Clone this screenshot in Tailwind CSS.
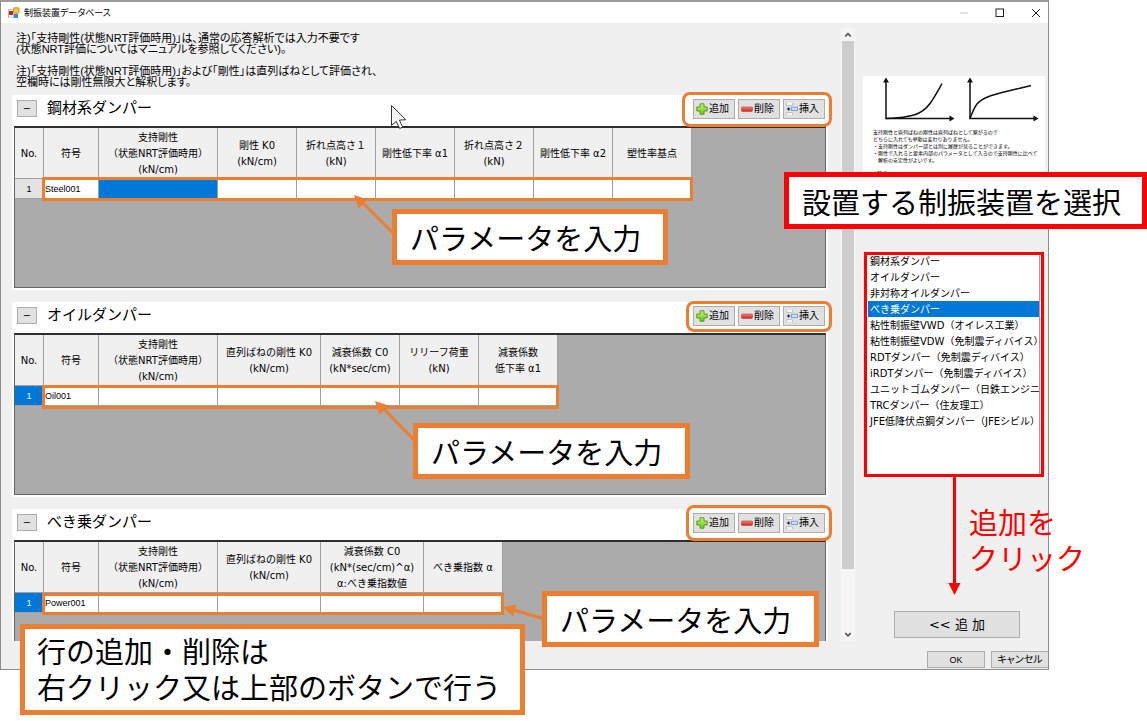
<!DOCTYPE html>
<html lang="ja">
<head>
<meta charset="utf-8">
<title>制振装置データベース</title>
<script src="https://cdn.jsdelivr.net/npm/@tailwindcss/browser@4"></script>
</head>
<body class="bg-white text-black">
<svg class="absolute h-0 w-0" aria-hidden="true">
  <defs>
    <linearGradient id="g-green" x1="0" y1="0" x2="0" y2="1"><stop offset="0" stop-color="#c6f27a"/><stop offset="1" stop-color="#6cc414"/></linearGradient>
    <linearGradient id="g-red" x1="0" y1="0" x2="0" y2="1"><stop offset="0" stop-color="#f3837a"/><stop offset="1" stop-color="#cf1f1a"/></linearGradient>
  </defs>
  <symbol id="i-add" viewBox="0 0 12 12"><path d="M4 .8h4V4h3.200v4H8v3.200H4V8H.8V4H4z" fill="url(#g-green)" stroke="#55a01c" stroke-width="1" stroke-linejoin="round"/></symbol>
  <symbol id="i-del" viewBox="0 0 12 12"><rect x=".5" y="4" width="11" height="4.500" rx="1" fill="url(#g-red)" stroke="#c9473f" stroke-width=".7"/></symbol>
  <symbol id="i-ins" viewBox="0 0 12 12"><path d="M.5 0v2.500h6V0M.5 12V9.500h6V12" fill="#f6f6f6" stroke="#b9bec6" stroke-width=".9"/><rect x="5.500" y="4.300" width="6" height="3.200" fill="#cfe0ff" stroke="#7d9fe8" stroke-width="1"/><path d="M.8 6h3.400M2.600 4.400v3.200" stroke="#222" stroke-width="1.200"/></symbol>
</svg>

<div class="relative flex h-screen min-h-[700px] min-w-[1100px] flex-col overflow-hidden pr-[98px] pb-[51px] font-['DejaVu_Sans','Noto_Sans_CJK_JP',sans-serif]">
  <div class="flex min-h-0 flex-1 flex-col border border-t-2 border-[#8c8c8c] border-t-[#9b9b9b] bg-[#f0f0f0]">
    <header class="flex h-[21px] shrink-0 items-center bg-white pr-0 pl-[7px]">
      <svg class="h-3 w-3" viewBox="0 0 12 12" aria-hidden="true">
        <path d="M.5 2.500h4M.5 2v9" stroke="#b9b9b9" stroke-width="1"/>
        <rect x="1" y="4" width="4" height="4" fill="#c5221c"/>
        <rect x="5.500" y=".8" width="5.500" height="5.500" rx=".5" fill="#f6c63a" stroke="#b98a12" stroke-width=".8"/>
        <rect x="5.500" y="7" width="4.500" height="4" fill="#3f86e8"/>
        <path d="M1 8.500h3.500V11H1z" fill="#dfe3ea"/>
      </svg>
      <h1 class="ml-1 text-[9px] leading-4 font-normal [font-feature-settings:'palt']">制振装置データベース</h1>
      <div class="ml-auto flex gap-3">
        <button type="button" aria-label="最小化" class="flex h-4 w-6 items-center justify-center"><svg class="h-3 w-3" viewBox="0 0 12 12"><path d="M2 6h8" stroke="#c8c8c8"/></svg></button>
        <button type="button" aria-label="最大化" class="flex h-4 w-6 items-center justify-center"><svg class="h-3 w-3" viewBox="0 0 12 12"><rect x="2" y="2" width="7.500" height="7.500" fill="none" stroke="#222"/></svg></button>
        <button type="button" aria-label="閉じる" class="flex h-4 w-6 items-center justify-center"><svg class="h-3 w-3" viewBox="0 0 12 12"><path d="M2 2l8 8M10 2l-8 8" stroke="#222"/></svg></button>
      </div>
    </header>

    <div class="flex min-h-0 flex-1 pt-[5px]">
      <main class="flex min-w-0 flex-1 flex-col gap-3 overflow-hidden pr-[13px] pl-[11px]">
        <div class="-mb-[5px] pt-[5px] pl-1 font-['Liberation_Sans','Noto_Sans_CJK_JP',sans-serif] text-[11px] leading-[11px] [font-feature-settings:'palt']">
          <p>注)「支持剛性(状態NRT評価時用)」は、通常の応答解析では入力不要です<br>(状態NRT評価についてはマニュアルを参照してください)。</p>
          <p class="mt-[11px]">注)「支持剛性(状態NRT評価時用)」および「剛性」は直列ばねとして評価され、<br>空欄時には剛性無限大と解釈します。</p>
        </div>

        <section class="shrink-0 bg-white px-[2px] pb-[2px]">
          <div class="flex h-[31px] items-start">
            <button type="button" aria-label="折りたたむ" class="mt-[5px] ml-[3px] h-[17px] w-5 border border-[#adadad] bg-[#e1e1e1] text-[10px] leading-[14px]">−</button>
            <h2 class="mt-[1px] ml-[10px] text-[15px] leading-6">鋼材系ダンパー</h2>
            <div class="relative mt-1 mr-[1px] ml-auto flex gap-[3px] text-[10px] leading-4">
              <button type="button" class="flex h-5 w-[42px] items-center gap-[1px] border border-[#adadad] bg-[#e1e1e1] pl-[2px]"><svg class="h-3 w-3"><use href="#i-add"/></svg>追加</button>
              <button type="button" class="flex h-5 w-[42px] items-center gap-[1px] border border-[#adadad] bg-[#e1e1e1] pl-[2px]"><svg class="h-3 w-3"><use href="#i-del"/></svg>削除</button>
              <button type="button" class="flex h-5 w-[42px] items-center gap-[1px] border border-[#adadad] bg-[#e1e1e1] pl-[2px]"><svg class="h-3 w-3"><use href="#i-ins"/></svg>挿入</button>
              <div class="pointer-events-none absolute -top-[7px] -right-[7px] -bottom-2 -left-[11px] rounded-lg border-3 border-[#ed7d31]"></div>
            </div>
          </div>
          <div class="h-[162px] border border-t-2 border-[#646464] border-t-[#2f2f2f] bg-[#ababab]">
            <div class="relative w-max">
              <table class="table-fixed border-separate border-spacing-0 text-center text-[10px] leading-4">
                <colgroup><col class="w-[29px]"><col class="w-[55px]"><col class="w-[119px]"><col class="w-[79px]"><col class="w-[79px]"><col class="w-[79px]"><col class="w-[79px]"><col class="w-[79px]"><col class="w-[79px]"></colgroup>
                <thead><tr class="h-[51px] bg-[#f0f0f0]">
                  <th class="border-r border-b border-[#a0a0a0] p-0 pt-[2px] font-normal">No.</th>
                  <th class="border-r border-b border-[#a0a0a0] p-0 pt-[2px] font-normal">符号</th>
                  <th class="border-r border-b border-[#a0a0a0] p-0 pt-[2px] font-normal whitespace-nowrap">支持剛性<br>（状態NRT評価時用）<br>(kN/cm)</th>
                  <th class="border-r border-b border-[#a0a0a0] p-0 pt-[2px] font-normal">剛性 K0<br>(kN/cm)</th>
                  <th class="border-r border-b border-[#a0a0a0] p-0 pt-[2px] font-normal">折れ点高さ１<br>(kN)</th>
                  <th class="border-r border-b border-[#a0a0a0] p-0 pt-[2px] font-normal whitespace-nowrap">剛性低下率 α1</th>
                  <th class="border-r border-b border-[#a0a0a0] p-0 pt-[2px] font-normal">折れ点高さ２<br>(kN)</th>
                  <th class="border-r border-b border-[#a0a0a0] p-0 pt-[2px] font-normal whitespace-nowrap">剛性低下率 α2</th>
                  <th class="border-r border-b border-[#a0a0a0] p-0 pt-[2px] font-normal">塑性率基点</th>
                </tr></thead>
                <tbody><tr class="h-5 bg-white font-['Liberation_Sans',sans-serif] text-[9px]">
                  <th class="border-r border-b border-[#a0a0a0] bg-[#e3e3e3] p-0 font-normal">1</th>
                  <td class="border-r border-b border-[#a0a0a0] p-0 pl-[1px] text-left">Steel001</td>
                  <td class="border-r border-b border-[#a0a0a0] bg-[#0078d7] p-0"></td>
                  <td class="border-r border-b border-[#a0a0a0] p-0"></td>
                  <td class="border-r border-b border-[#a0a0a0] p-0"></td>
                  <td class="border-r border-b border-[#a0a0a0] p-0"></td>
                  <td class="border-r border-b border-[#a0a0a0] p-0"></td>
                  <td class="border-r border-b border-[#a0a0a0] p-0"></td>
                  <td class="border-r border-b border-[#a0a0a0] p-0"></td>
                </tr></tbody>
              </table>
              <div class="pointer-events-none absolute -right-[1px] -bottom-[2px] left-[27px] h-6 border-3 border-[#ed7d31]"></div>
            </div>
          </div>
        </section>

        <section class="shrink-0 bg-white px-[2px] pb-[2px]">
          <div class="flex h-[31px] items-start">
            <button type="button" aria-label="折りたたむ" class="mt-[5px] ml-[3px] h-[17px] w-5 border border-[#adadad] bg-[#e1e1e1] text-[10px] leading-[14px]">−</button>
            <h2 class="mt-[1px] ml-[10px] text-[15px] leading-6">オイルダンパー</h2>
            <div class="relative mt-1 mr-[1px] ml-auto flex gap-[3px] text-[10px] leading-4">
              <button type="button" class="flex h-5 w-[42px] items-center gap-[1px] border border-[#adadad] bg-[#e1e1e1] pl-[2px]"><svg class="h-3 w-3"><use href="#i-add"/></svg>追加</button>
              <button type="button" class="flex h-5 w-[42px] items-center gap-[1px] border border-[#adadad] bg-[#e1e1e1] pl-[2px]"><svg class="h-3 w-3"><use href="#i-del"/></svg>削除</button>
              <button type="button" class="flex h-5 w-[42px] items-center gap-[1px] border border-[#adadad] bg-[#e1e1e1] pl-[2px]"><svg class="h-3 w-3"><use href="#i-ins"/></svg>挿入</button>
              <div class="pointer-events-none absolute -top-[5px] -right-[7px] -bottom-[6px] -left-[7px] rounded-lg border-3 border-[#ed7d31]"></div>
            </div>
          </div>
          <div class="h-[162px] border border-t-2 border-[#646464] border-t-[#2f2f2f] bg-[#ababab]">
            <div class="relative w-max">
              <table class="table-fixed border-separate border-spacing-0 text-center text-[10px] leading-4">
                <colgroup><col class="w-[29px]"><col class="w-[55px]"><col class="w-[119px]"><col class="w-[103px]"><col class="w-[79px]"><col class="w-[79px]"><col class="w-[79px]"></colgroup>
                <thead><tr class="h-[51px] bg-[#f0f0f0]">
                  <th class="border-r border-b border-[#a0a0a0] p-0 pt-[2px] font-normal">No.</th>
                  <th class="border-r border-b border-[#a0a0a0] p-0 pt-[2px] font-normal">符号</th>
                  <th class="border-r border-b border-[#a0a0a0] p-0 pt-[2px] font-normal whitespace-nowrap">支持剛性<br>（状態NRT評価時用）<br>(kN/cm)</th>
                  <th class="border-r border-b border-[#a0a0a0] p-0 pt-[2px] font-normal whitespace-nowrap">直列ばねの剛性 K0<br>(kN/cm)</th>
                  <th class="border-r border-b border-[#a0a0a0] p-0 pt-[2px] font-normal whitespace-nowrap">減衰係数 C0<br>(kN*sec/cm)</th>
                  <th class="border-r border-b border-[#a0a0a0] p-0 pt-[2px] font-normal">リリーフ荷重<br>(kN)</th>
                  <th class="border-r border-b border-[#a0a0a0] p-0 pt-[2px] font-normal">減衰係数<br>低下率 α1</th>
                </tr></thead>
                <tbody><tr class="h-5 bg-white font-['Liberation_Sans',sans-serif] text-[9px]">
                  <th class="border-r border-b border-[#a0a0a0] bg-[#0078d7] p-0 font-normal text-white">1</th>
                  <td class="border-r border-b border-[#a0a0a0] p-0 pl-[1px] text-left">Oil001</td>
                  <td class="border-r border-b border-[#a0a0a0] p-0"></td>
                  <td class="border-r border-b border-[#a0a0a0] p-0"></td>
                  <td class="border-r border-b border-[#a0a0a0] p-0"></td>
                  <td class="border-r border-b border-[#a0a0a0] p-0"></td>
                  <td class="border-r border-b border-[#a0a0a0] p-0"></td>
                </tr></tbody>
              </table>
              <div class="pointer-events-none absolute -right-[1px] -bottom-[3px] left-[27px] h-6 border-3 border-[#ed7d31]"></div>
            </div>
          </div>
        </section>

        <section class="shrink-0 bg-white px-[2px] pb-[2px]">
          <div class="flex h-[31px] items-start">
            <button type="button" aria-label="折りたたむ" class="mt-[5px] ml-[3px] h-[17px] w-5 border border-[#adadad] bg-[#e1e1e1] text-[10px] leading-[14px]">−</button>
            <h2 class="mt-[1px] ml-[10px] text-[15px] leading-6">べき乗ダンパー</h2>
            <div class="relative mt-1 mr-[1px] ml-auto flex gap-[3px] text-[10px] leading-4">
              <button type="button" class="flex h-5 w-[42px] items-center gap-[1px] border border-[#adadad] bg-[#e1e1e1] pl-[2px]"><svg class="h-3 w-3"><use href="#i-add"/></svg>追加</button>
              <button type="button" class="flex h-5 w-[42px] items-center gap-[1px] border border-[#adadad] bg-[#e1e1e1] pl-[2px]"><svg class="h-3 w-3"><use href="#i-del"/></svg>削除</button>
              <button type="button" class="flex h-5 w-[42px] items-center gap-[1px] border border-[#adadad] bg-[#e1e1e1] pl-[2px]"><svg class="h-3 w-3"><use href="#i-ins"/></svg>挿入</button>
              <div class="pointer-events-none absolute -top-2 -right-[7px] -bottom-2 -left-[7px] rounded-lg border-3 border-[#ed7d31]"></div>
            </div>
          </div>
          <div class="h-[162px] border border-t-2 border-[#646464] border-t-[#2f2f2f] bg-[#ababab]">
            <div class="relative w-max">
              <table class="table-fixed border-separate border-spacing-0 text-center text-[10px] leading-4">
                <colgroup><col class="w-[29px]"><col class="w-[55px]"><col class="w-[119px]"><col class="w-[103px]"><col class="w-[103px]"><col class="w-[79px]"></colgroup>
                <thead><tr class="h-[51px] bg-[#f0f0f0]">
                  <th class="border-r border-b border-[#a0a0a0] p-0 pt-[2px] font-normal">No.</th>
                  <th class="border-r border-b border-[#a0a0a0] p-0 pt-[2px] font-normal">符号</th>
                  <th class="border-r border-b border-[#a0a0a0] p-0 pt-[2px] font-normal whitespace-nowrap">支持剛性<br>（状態NRT評価時用）<br>(kN/cm)</th>
                  <th class="border-r border-b border-[#a0a0a0] p-0 pt-[2px] font-normal whitespace-nowrap">直列ばねの剛性 K0<br>(kN/cm)</th>
                  <th class="border-r border-b border-[#a0a0a0] p-0 pt-[2px] font-normal whitespace-nowrap">減衰係数 C0<br>(kN*(sec/cm)^α)<br>α:べき乗指数値</th>
                  <th class="border-r border-b border-[#a0a0a0] p-0 pt-[2px] font-normal whitespace-nowrap">べき乗指数 α</th>
                </tr></thead>
                <tbody><tr class="h-5 bg-white font-['Liberation_Sans',sans-serif] text-[9px]">
                  <th class="border-r border-b border-[#a0a0a0] bg-[#0078d7] p-0 font-normal text-white">1</th>
                  <td class="border-r border-b border-[#a0a0a0] p-0 pl-[1px] text-left">Power001</td>
                  <td class="border-r border-b border-[#a0a0a0] p-0"></td>
                  <td class="border-r border-b border-[#a0a0a0] p-0"></td>
                  <td class="border-r border-b border-[#a0a0a0] p-0"></td>
                  <td class="border-r border-b border-[#a0a0a0] p-0"></td>
                </tr></tbody>
              </table>
              <div class="pointer-events-none absolute -right-[1px] -bottom-[2px] left-[27px] h-[22px] border-3 border-[#ed7d31]"></div>
            </div>
          </div>
        </section>
      </main>

      <div class="flex w-[14px] shrink-0 flex-col items-center bg-[#f5f5f5]" aria-hidden="true">
        <svg class="h-[13px] w-3" viewBox="0 0 12 13"><path d="M3.200 8.500L6 5.700l2.800 2.800" fill="none" stroke="#505050" stroke-width="1.600"/></svg>
        <div class="h-[528px] w-3 bg-[#cdcdcd]"></div>
        <svg class="mt-auto h-[13px] w-3" viewBox="0 0 12 13"><path d="M3.200 5L6 7.800 8.800 5" fill="none" stroke="#505050" stroke-width="1.600"/></svg>
      </div>

      <aside class="flex w-[193px] shrink-0 flex-col pt-12 pr-[3px] pl-2">
        <div class="h-[176px]">
          <div class="h-32 bg-white pt-px">
            <svg class="h-[50px] w-[182px]" viewBox="863 77 182 50" aria-hidden="true">
              <g fill="none" stroke="#111" stroke-width="1.500"><path d="M886 81v37.500h65M970 81v37.500h65"/><path d="M886 118.500c26-1 36-4 44-15 5-7 8-13 12-20M970 118.500c5-13 7-18 20-22.500 14-5 28-7 41-10.500"/></g>
              <path d="M886 77.500l3 5h-6zM970 77.500l3 5h-6zM954.500 118.500l-5 3v-6zM1038.500 118.500l-5 3v-6z" fill="#111"/>
            </svg>
            <p class="mt-[2px] pl-[10px] text-[5px] leading-[7px] whitespace-nowrap">支持剛性と直列ばねの剛性は直列ばねとして繋がるので<br>どちらに入れても挙動は変わりありません。<br>・支持剛性はダンパー部とは別に履歴が見ることができます。<br>・剛性で入れると要素内部のパラメータとして入るので支持剛性に比べて<br>　解析の安定性がよいです。</p>
            <p class="mt-[6px] pl-[10px] text-[5px] leading-[7px]">※略語</p>
          </div>
        </div>
        <div class="relative mr-px ml-px h-[225px] px-1 pt-px pb-[2px]">
          <label for="damper" class="sr-only">制振装置</label>
          <select id="damper" size="13" class="block h-full w-full appearance-none overflow-hidden border-r border-[#a0a0a0] bg-white p-0 text-[10px] leading-4 outline-none">
            <option class="h-4 min-h-0 p-0 px-[2px]">鋼材系ダンパー</option>
            <option class="h-4 min-h-0 p-0 px-[2px]">オイルダンパー</option>
            <option class="h-4 min-h-0 p-0 px-[2px]">非対称オイルダンパー</option>
            <option selected class="h-4 min-h-0 bg-[#0078d7] bg-[linear-gradient(#0078d7,#0078d7)] p-0 px-[2px] text-white checked:text-white">べき乗ダンパー</option>
            <option class="h-4 min-h-0 p-0 px-[2px]">粘性制振壁VWD（オイレス工業）</option>
            <option class="h-4 min-h-0 p-0 px-[2px]">粘性制振壁VDW（免制震ディバイス）</option>
            <option class="h-4 min-h-0 p-0 px-[2px]">RDTダンパー（免制震ディバイス）</option>
            <option class="h-4 min-h-0 p-0 px-[2px]">iRDTダンパー（免制震ディバイス）</option>
            <option class="h-4 min-h-0 p-0 px-[2px]">ユニットゴムダンパー（日鉄エンジニアリング）</option>
            <option class="h-4 min-h-0 p-0 px-[2px]">TRCダンパー（住友理工）</option>
            <option class="h-4 min-h-0 p-0 px-[2px]">JFE低降伏点鋼ダンパー（JFEシビル）</option>
          </select>
          <div class="pointer-events-none absolute inset-0 border-3 border-[#ff0000]"></div>
        </div>
        <button type="button" class="mt-auto mb-[3px] ml-[31px] h-[27px] w-[126px] border border-[#adadad] bg-[#e1e1e1] text-[13px] leading-5">&lt;&lt; 追 加</button>
      </aside>
    </div>

    <footer class="flex h-7 shrink-0 items-start justify-end gap-[6px] pt-[10px] text-[10px] leading-[14px] [font-feature-settings:'palt']">
      <button type="button" class="h-[17px] w-[58px] border border-[#adadad] bg-[#e1e1e1] font-['Liberation_Sans',sans-serif] text-[9px]">OK</button>
      <button type="button" class="h-[17px] w-[57px] border border-r-0 border-[#adadad] bg-[#e1e1e1]">キャンセル</button>
    </footer>
  </div>

  <!-- 説明用の注釈 -->
  <svg class="pointer-events-none absolute top-0 left-0 h-[721px] w-[1147px]" viewBox="0 0 1147 721" aria-hidden="true">
    <g stroke="#ed7d31" stroke-width="3"><path d="M394 234L361 201M415 441L382 407M543 618.500L512 609.500"/></g>
    <path d="M354 195l13.500 4.500-9 9zM375 401l13.500 4.500-9 9zM503 607l13.500-2.500-3.500 12z" fill="#ed7d31"/>
    <path d="M954.500 476v110" stroke="#ff0000" stroke-width="3"/>
    <path d="M954.500 595l-6-12h12z" fill="#ff0000"/>
    <path d="M391.500 105.500v20l4.700-4.200 3.500 7.200 3-1.400-3.300-7 6.400-.4z" fill="#fff" stroke="#333" stroke-width="1"/>
  </svg>
  <div class="font-['Noto_Sans_CJK_JP',sans-serif] text-[29px] leading-9 whitespace-nowrap">
    <p class="absolute top-[209px] left-[392px] flex h-14 w-[276px] items-center border-5 border-[#ed7d31] bg-white pb-px pl-[13px]">パラメータを入力</p>
    <p class="absolute top-[423px] left-[413px] flex h-14 w-[277px] items-center border-5 border-[#ed7d31] bg-white pb-px pl-[13px]">パラメータを入力</p>
    <p class="absolute top-[591px] left-[542px] flex h-14 w-[277px] items-center border-5 border-[#ed7d31] bg-white pb-px pl-[13px]">パラメータを入力</p>
    <p class="absolute top-[624px] left-[20px] flex h-[91px] w-[505px] items-center border-5 border-[#ed7d31] bg-white pb-[3px] pl-3">行の追加・削除は<br>右クリック又は上部のボタンで行う</p>
    <p class="absolute top-[172px] left-[784px] flex h-[57px] w-[363px] items-center border-5 border-[#ff0000] bg-white pl-[13px]">設置する制振装置を選択</p>
    <p class="absolute top-[503px] left-[969px] text-[#ff0000]">追加を<br>クリック</p>
  </div>
</div>
</body>
</html>
